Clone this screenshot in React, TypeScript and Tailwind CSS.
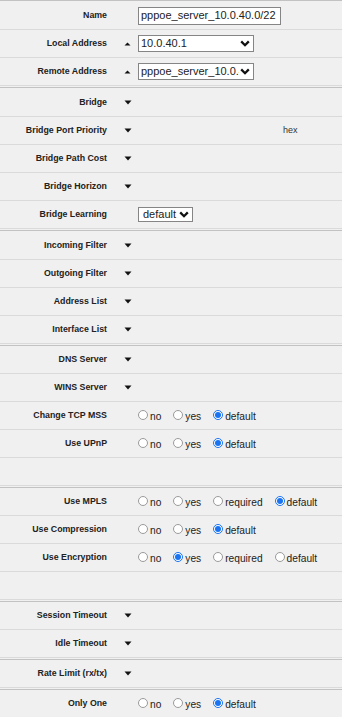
import React from 'react';

type Opt = { label: string; checked?: boolean };

const font = "font-['Liberation_Sans',Arial,sans-serif]";

function Down() {
  return (
    <svg width="8" height="5" viewBox="0 0 8 5" className="block">
      <polygon points="0.5,0.5 7.5,0.5 4,4.5" fill="#111" />
    </svg>
  );
}

function Up() {
  return (
    <svg width="7" height="4" viewBox="0 0 7 4" className="block">
      <polygon points="0.5,3.5 6.5,3.5 3.5,0.5" fill="#111" />
    </svg>
  );
}

function Chevron() {
  return (
    <svg width="10" height="7" viewBox="0 0 10 7" className="block">
      <path d="M1.2 1.4 L5 5.2 L8.8 1.4" fill="none" stroke="#111" strokeWidth="2.3" />
    </svg>
  );
}

function Row({ label, arrow, children }: { label?: string; arrow?: 'up' | 'down'; children?: React.ReactNode }) {
  return (
    <div className="flex h-[28px] items-center border-b border-[#dadada]">
      <div className="mt-[1px] w-[107px] shrink-0 text-right text-[8.8px] font-bold text-[#222]">{label}</div>
      <div className="flex w-[31px] shrink-0 pl-[17px]">
        {arrow === 'down' && <Down />}
        {arrow === 'up' && <Up />}
      </div>
      <div className="flex flex-1 items-center">{children}</div>
    </div>
  );
}

function Sep({ thick }: { thick?: boolean }) {
  return <div className={thick ? 'mt-[1px] mb-[1px] h-[1px] bg-[#c2c2c2]' : 'mt-[1px] h-[1px] bg-[#c2c2c2]'} />;
}

function Select({ value, w }: { value: string; w: string }) {
  return (
    <div className={`relative flex h-[17px] items-center overflow-hidden border border-[#858585] bg-white pl-[2px] text-[11px] text-[#222] ${w}`}>
      <span className="whitespace-nowrap">{value}</span>
      <span className="absolute right-0 top-0 flex h-full items-center bg-white pl-[1px] pr-[3px]">
        <Chevron />
      </span>
    </div>
  );
}

function Radios({ options }: { options: Opt[] }) {
  return (
    <div className="flex items-center text-[10.2px] text-[#222]">
      {options.map((o) => (
        <label key={o.label} className="mr-[12px] flex items-center">
          {o.checked ? (
            <span className="mr-[2px] flex h-[10px] w-[10px] items-center justify-center rounded-full border border-[#1a73f0] bg-white">
              <span className="h-[6px] w-[6px] rounded-full bg-[#1a73f0]" />
            </span>
          ) : (
            <span className="mr-[2px] h-[10px] w-[10px] rounded-full border border-[#9a9a9a] bg-white" />
          )}
          <span className="mt-[2px]">{o.label}</span>
        </label>
      ))}
    </div>
  );
}

const three = (d: 'no' | 'yes' | 'default'): Opt[] =>
  ['no', 'yes', 'default'].map((l) => ({ label: l, checked: l === d }));
const four = (d: 'no' | 'yes' | 'required' | 'default'): Opt[] =>
  ['no', 'yes', 'required', 'default'].map((l) => ({ label: l, checked: l === d }));

export default function App() {
  return (
    <div className={`h-[717px] w-[342px] overflow-hidden bg-[#f0f0f0] ${font}`}>
      <div className="mb-[1px] h-[1px] bg-[#c2c2c2]" />

      <Row label="Name">
        <div className="flex h-[18px] w-[143px] items-center border border-[#858585] bg-white pl-[2px] text-[11px] text-[#222]">
          pppoe_server_10.0.40.0/22
        </div>
      </Row>
      <Row label="Local Address" arrow="up">
        <Select value="10.0.40.1" w="w-[116px]" />
      </Row>
      <Row label="Remote Address" arrow="up">
        <Select value="pppoe_server_10.0.4" w="w-[116px]" />
      </Row>
      <Sep thick />

      <Row label="Bridge" arrow="down" />
      <Row label="Bridge Port Priority" arrow="down">
        <span className="ml-[145px] text-[9px] text-[#333]">hex</span>
      </Row>
      <Row label="Bridge Path Cost" arrow="down" />
      <Row label="Bridge Horizon" arrow="down" />
      <Row label="Bridge Learning">
        <div className="relative flex h-[15px] w-[55px] items-center border border-[#858585] bg-white pl-[4px] text-[11px] text-[#222]">
          <span>default</span>
          <span className="absolute right-[3px] top-0 flex h-full items-center">
            <Chevron />
          </span>
        </div>
      </Row>
      <Sep thick />

      <Row label="Incoming Filter" arrow="down" />
      <Row label="Outgoing Filter" arrow="down" />
      <Row label="Address List" arrow="down" />
      <Row label="Interface List" arrow="down" />
      <Sep />

      <Row label="DNS Server" arrow="down" />
      <Row label="WINS Server" arrow="down" />
      <Row label="Change TCP MSS">
        <Radios options={three('default')} />
      </Row>
      <Row label="Use UPnP">
        <Radios options={three('default')} />
      </Row>
      <Row />
      <Sep />

      <Row label="Use MPLS">
        <Radios options={four('default')} />
      </Row>
      <Row label="Use Compression">
        <Radios options={three('default')} />
      </Row>
      <Row label="Use Encryption">
        <Radios options={four('yes')} />
      </Row>
      <Row />
      <Sep />

      <Row label="Session Timeout" arrow="down" />
      <Row label="Idle Timeout" arrow="down" />
      <Sep />

      <Row label="Rate Limit (rx/tx)" arrow="down" />
      <Sep />

      <Row label="Only One">
        <Radios options={three('default')} />
      </Row>
    </div>
  );
}
